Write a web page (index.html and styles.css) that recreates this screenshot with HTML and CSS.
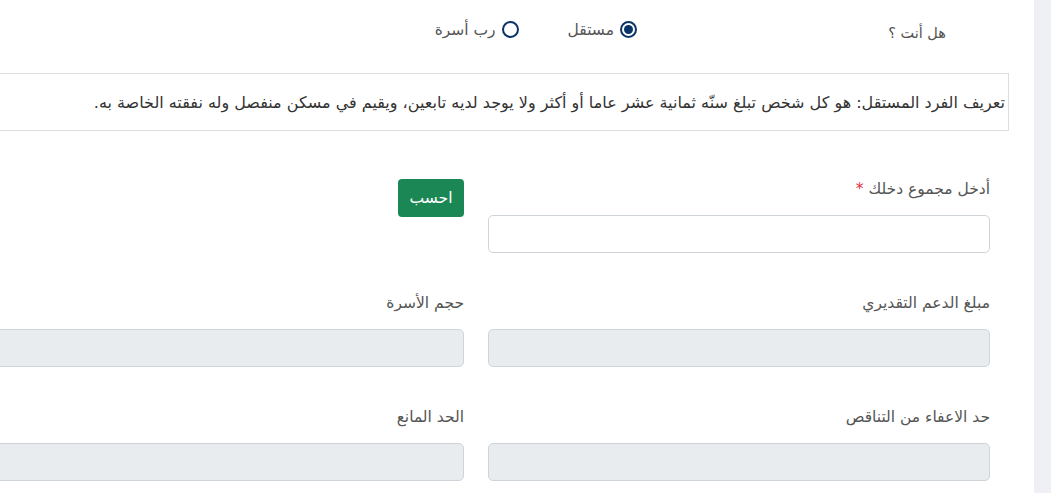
FILE: index.html
```html
<!DOCTYPE html>
<html lang="ar" dir="rtl">
<head>
<meta charset="utf-8">
<title>حاسبة الدعم</title>
<link rel="stylesheet" href="styles.css">
</head>
<body>
<div class="layout">
  <aside class="strip"></aside>
  <main class="content">
    <div class="question-row">
      <div class="question">هل أنت ؟</div>
      <div class="options">
        <label class="option">
          <span class="radio checked"></span>
          <span class="option-text">مستقل</span>
        </label>
        <label class="option">
          <span class="radio"></span>
          <span class="option-text">رب أسرة</span>
        </label>
      </div>
    </div>

    <div class="info-box">تعريف الفرد المستقل: هو كل شخص تبلغ سنّه ثمانية عشر عاما أو أكثر ولا يوجد لديه تابعين، ويقيم في مسكن منفصل وله نفقته الخاصة به.</div>

    <div class="form-grid">
      <div class="field">
        <div class="label">أدخل مجموع دخلك <span class="req">*</span></div>
        <div class="input"></div>
      </div>
      <div class="field">
        <button class="btn">احسب</button>
      </div>

      <div class="field">
        <div class="label">مبلغ الدعم التقديري</div>
        <div class="input disabled"></div>
      </div>
      <div class="field">
        <div class="label">حجم الأسرة</div>
        <div class="input disabled"></div>
      </div>

      <div class="field">
        <div class="label">حد الاعفاء من التناقص</div>
        <div class="input disabled"></div>
      </div>
      <div class="field">
        <div class="label">الحد المانع</div>
        <div class="input disabled"></div>
      </div>
    </div>
  </main>
</div>
</body>
</html>
```

FILE: styles.css
```css
* { box-sizing: border-box; }
html, body {
  margin: 0;
  padding: 0;
  background: #ffffff;
}
body {
  font-family: "DejaVu Sans", "Noto Sans", sans-serif;
  color: #444;
  width: 1051px;
  height: 493px;
  overflow: hidden;
}
.layout {
  display: flex;
  height: 493px;
}
.strip {
  width: 17px;
  flex: none;
  background: #eef0f5;
}
.content {
  width: 1034px;
  flex: none;
  background: #fff;
  overflow: hidden;
}
.question-row {
  display: flex;
  align-items: center;
  height: 57px;
  padding-right: 88px;
  padding-top: 2px;
}
.question {
  width: 309px;
  font-size: 14.5px;
  color: #555;
  padding-top: 6px;
}
.options {
  display: flex;
  gap: 49px;
}
.option {
  display: flex;
  align-items: center;
  gap: 6px;
  font-size: 15.5px;
  color: #555;
}
.radio {
  width: 17px;
  height: 17px;
  border: 2px solid #0a3468;
  border-radius: 50%;
  display: inline-block;
  position: relative;
}
.radio.checked::after {
  content: "";
  position: absolute;
  inset: 2px;
  border-radius: 50%;
  background: #0a3468;
}
.option-text { line-height: 20px; padding-top: 1px; }
.info-box {
  margin-top: 16px;
  margin-right: 25px;
  width: 1060px;
  height: 58px;
  border: 1px solid #dedede;
  display: flex;
  align-items: center;
  padding-right: 3px;
  font-size: 16px;
  color: #333;
  white-space: nowrap;
}
.form-grid {
  margin-top: 48px;
  margin-right: 44px;
  width: 1028px;
  display: grid;
  grid-template-columns: 502px 502px;
  column-gap: 24px;
  row-gap: 40px;
}
.field {
  display: flex;
  flex-direction: column;
  align-items: stretch;
}
.label {
  font-size: 15.5px;
  line-height: 21px;
  margin-bottom: 15px;
  color: #555;
}
.req { color: #dc3545; }
.input {
  height: 38px;
  border: 1px solid #cfd4da;
  border-radius: 5px;
  background: #fff;
}
.input.disabled { background: #e9ecef; }
.btn {
  align-self: flex-start;
  width: 66px;
  height: 38px;
  background: #1b8754;
  color: #fff;
  border: none;
  border-radius: 4px;
  font-family: inherit;
  font-size: 15.5px;
  font-weight: normal;
  padding: 0;
}
```
